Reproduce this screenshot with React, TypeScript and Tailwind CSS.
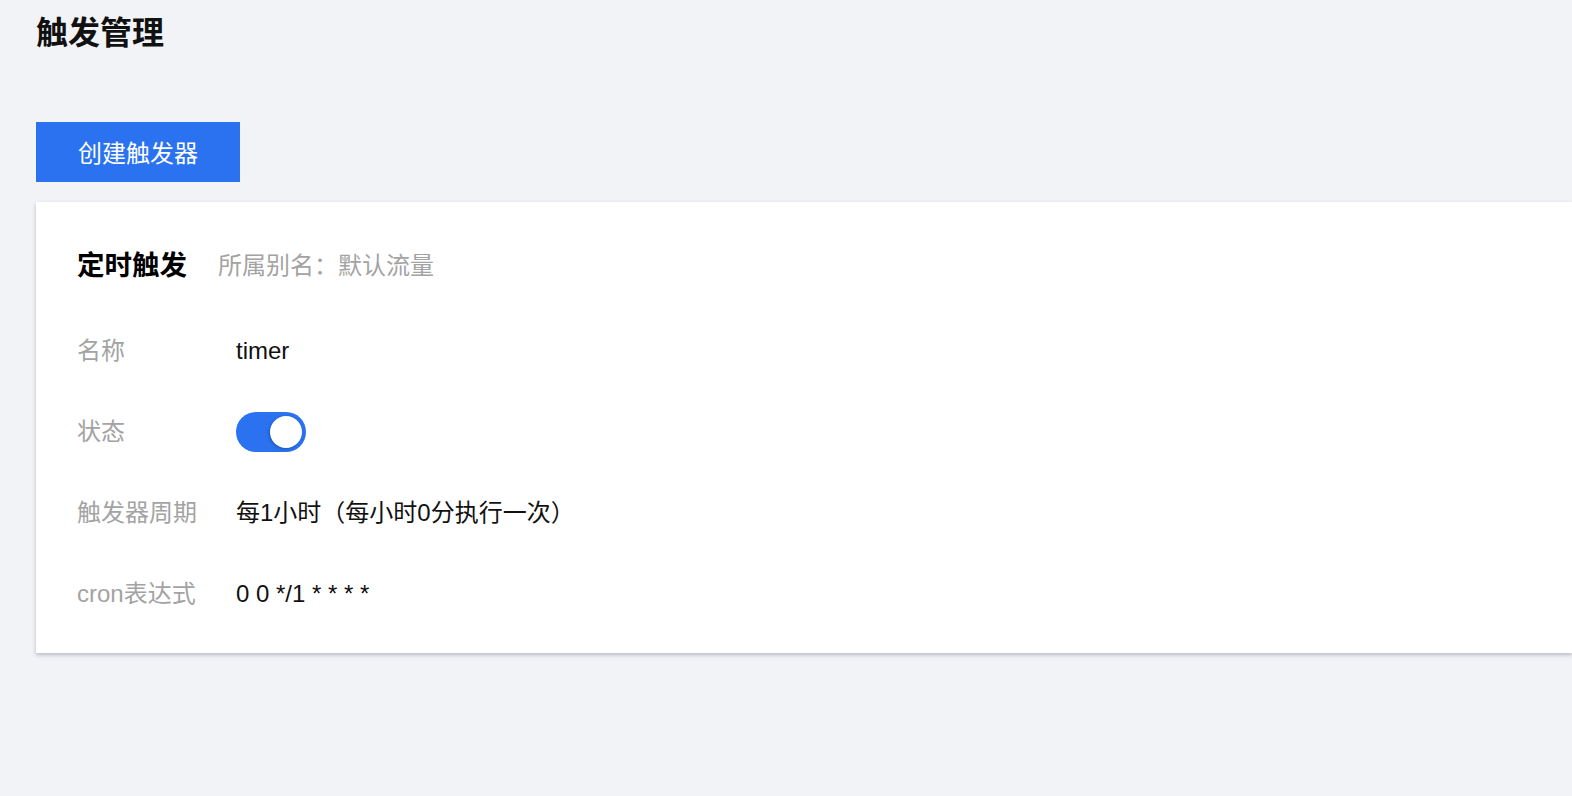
import React from "react";

const rows: { label: string; value?: string; toggle?: boolean; h: string }[] = [
  { label: "名称", value: "timer", h: "h-[81px]" },
  { label: "状态", toggle: true, h: "h-[81px]" },
  { label: "触发器周期", value: "每1小时（每小时0分执行一次）", h: "h-[81px]" },
  { label: "cron表达式", value: "0 0 */1 * * * *", h: "h-[81px]" },
];

export default function App() {
  return (
    <div
      className="min-h-screen bg-[#f2f3f7] pl-9"
      style={{ fontFamily: '"Liberation Sans", "Noto Sans CJK SC", sans-serif' }}
    >
      <div className="pt-[17px] text-[32px] leading-[32px] font-bold text-[#111]">触发管理</div>
      <button className="mt-[73px] flex h-[60px] w-[204px] items-center justify-center bg-[#2a72f0] pt-[3px] text-[24px] text-white">
        创建触发器
      </button>
      <div className="mt-[20px] bg-white pl-[41px] pt-[44px] pb-[19px] shadow-[0_2px_4px_0_rgba(54,58,80,0.3)]">
        <div className="flex h-[40px] items-center">
          <span className="text-[27.5px] font-bold text-black">定时触发</span>
          <span className="ml-[31px] text-[24px] text-[#a3a3a3]">所属别名：默认流量</span>
        </div>
        <div className="mt-[24px] flex flex-col">
          {rows.map((r) => (
            <div key={r.label} className={`flex items-center text-[24px] ${r.h}`}>
              <div className="w-[159px] text-[#a3a3a3]">{r.label}</div>
              {r.toggle ? (
                <div className="flex h-[40px] w-[70px] items-center justify-end rounded-full bg-[#2a72f0] pr-[4px]">
                  <div className="h-[32px] w-[32px] rounded-full bg-white shadow-[-1px_1px_3px_rgba(0,0,0,0.25)]" />
                </div>
              ) : (
                <div className="text-[#111]">{r.value}</div>
              )}
            </div>
          ))}
        </div>
      </div>
    </div>
  );
}
